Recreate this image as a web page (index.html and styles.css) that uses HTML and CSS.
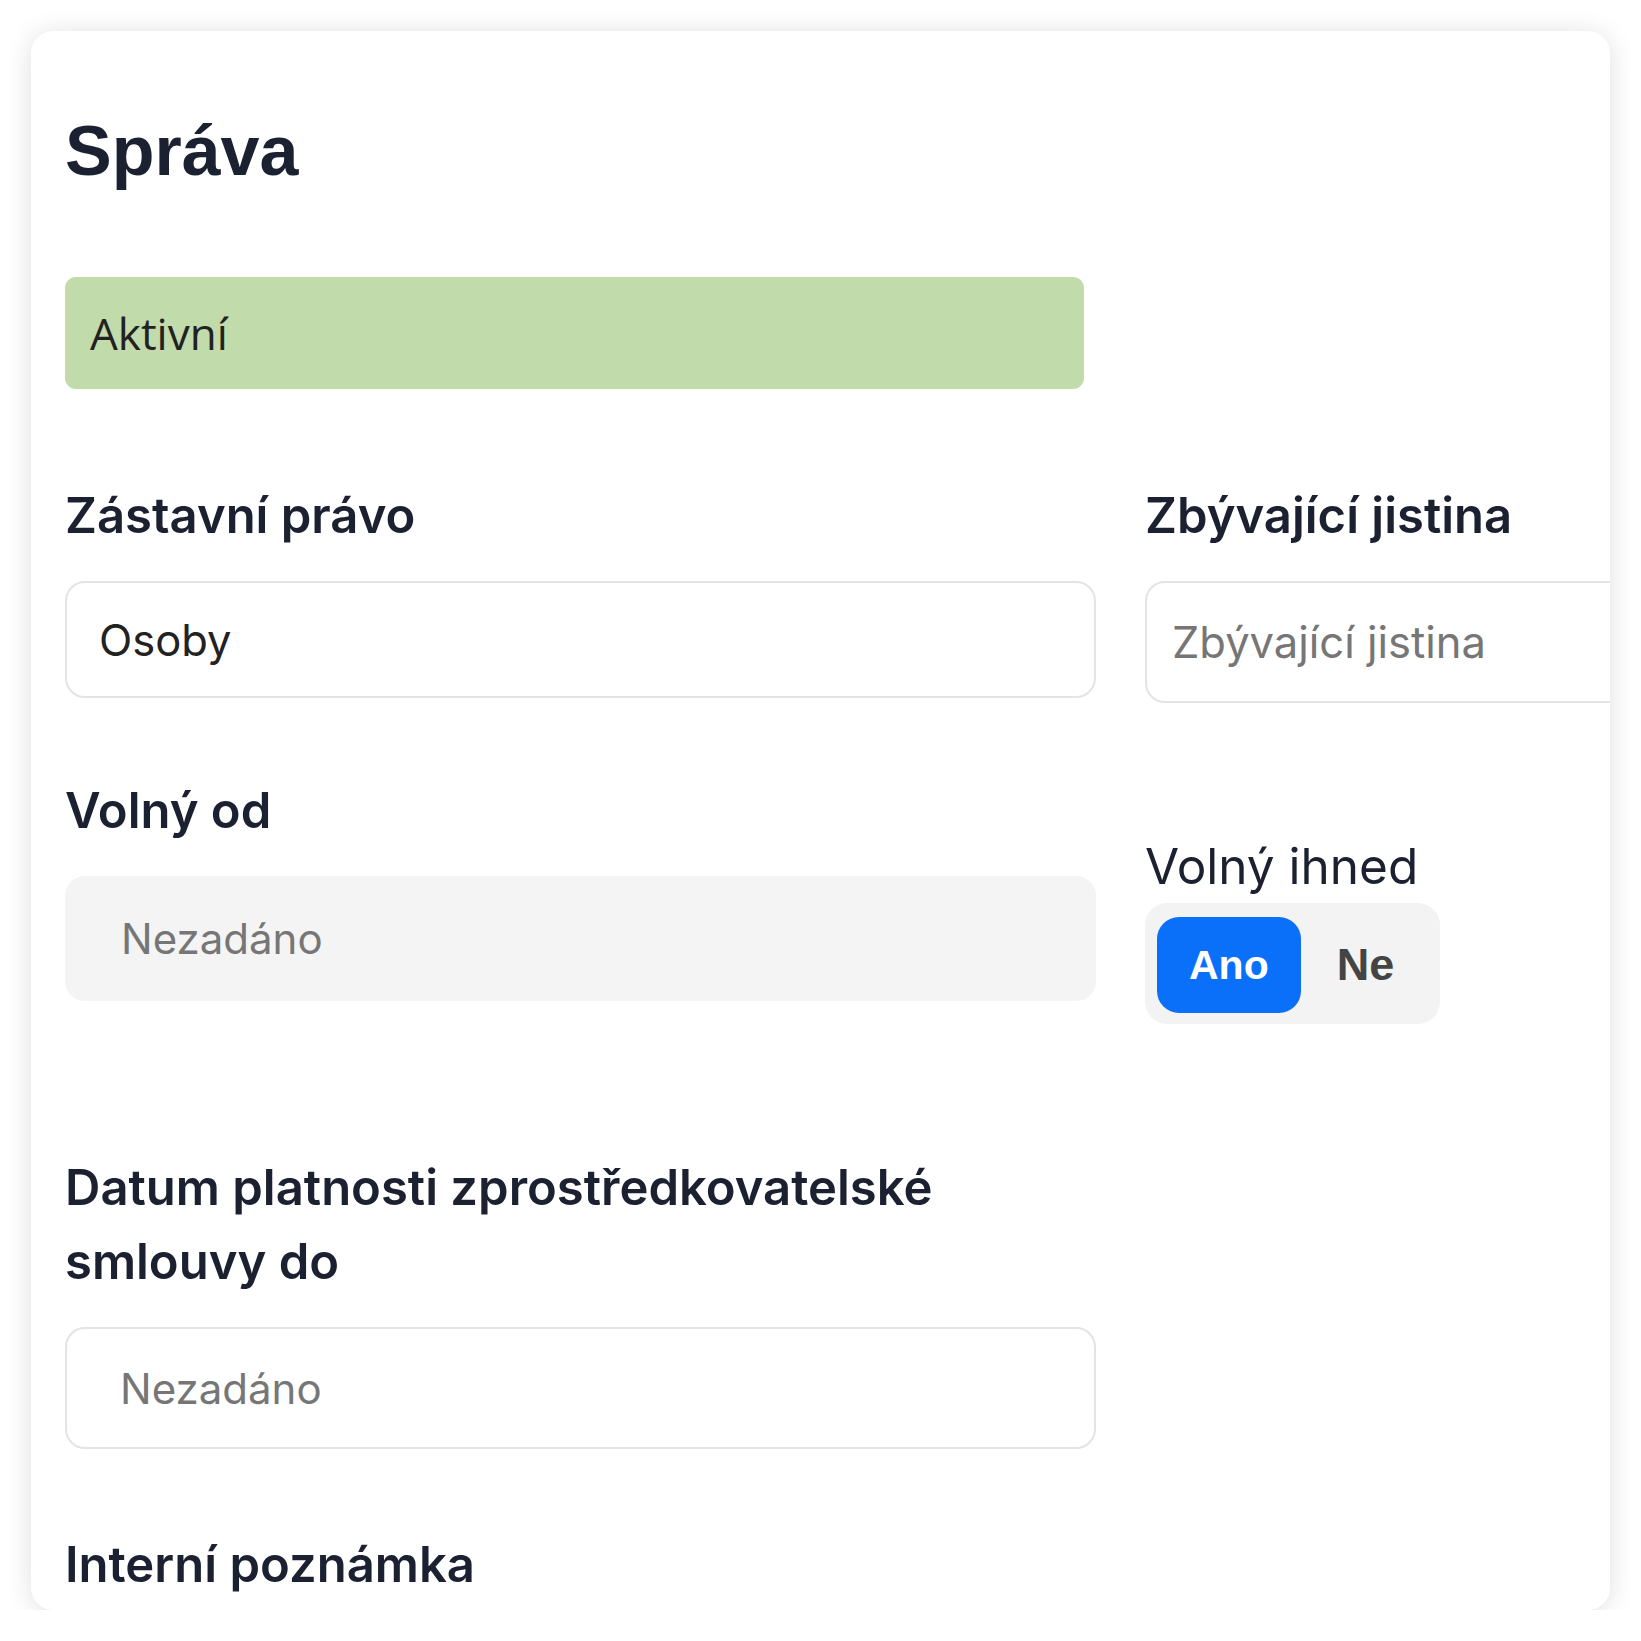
FILE: index.html
```html
<!DOCTYPE html>
<html lang="cs">
<head>
    <meta charset="UTF-8">
    <title>Správa</title>
    <link rel="stylesheet" href="styles.css">
</head>
<body>
    <section class="card">
        <h1 class="card-title">Správa</h1>

        <div class="status status-active">Aktivní</div>

        <div class="form-grid">
            <div class="field">
                <label class="field-label">Zástavní právo</label>
                <input class="field-input input-lien" type="text" value="Osoby">
            </div>
            <div class="field">
                <label class="field-label">Zbývající jistina</label>
                <input class="field-input input-principal" type="text" placeholder="Zbývající jistina">
            </div>

            <div class="field row-two">
                <label class="field-label">Volný od</label>
                <input class="field-input input-disabled" type="text" placeholder="Nezadáno" disabled>
            </div>
            <div class="field row-two field-toggle">
                <label class="field-label label-light">Volný ihned</label>
                <div class="toggle">
                    <button class="toggle-btn is-active" type="button">Ano</button>
                    <button class="toggle-btn" type="button">Ne</button>
                </div>
            </div>

            <div class="field row-three">
                <label class="field-label">Datum platnosti zprostředkovatelské smlouvy do</label>
                <input class="field-input input-date" type="text" placeholder="Nezadáno">
            </div>
            <div class="field row-three"></div>

            <div class="field row-four">
                <label class="field-label">Interní poznámka</label>
            </div>
        </div>
    </section>
</body>
</html>
```

FILE: styles.css
```css
/* Grundlayout */
html, body {
    margin: 0;
    padding: 0;
    background: #ffffff;
}
body {
    padding: 31px 0 0 31px;
    font-family: Inter, "Noto Sans", sans-serif;
    color: #1b2130;
}

/* Karte */
.card {
    width: 1579px;
    height: 1579px;
    box-sizing: border-box;
    padding: 80px 0 0 34px;
    background: #ffffff;
    border-radius: 22px;
    box-shadow: 0 2px 26px rgba(0, 0, 0, 0.13);
    overflow: hidden;
}
.card-title {
    margin: 0;
    font-family: "Liberation Sans", Arial, sans-serif;
    font-weight: 700;
    font-size: 70px;
    line-height: 80px;
    color: #1b2130;
}

/* Statusbalken */
.status {
    width: 1019px;
    height: 112px;
    margin-top: 86px;
    box-sizing: border-box;
    padding-left: 25px;
    display: flex;
    align-items: center;
    border-radius: 11px;
    font-family: "Open Sans", sans-serif;
    font-size: 44px;
    color: #222222;
}
.status-active {
    background: #c1dbab;
}

/* Formular */
.form-grid {
    display: grid;
    grid-template-columns: 1031px 1031px;
    column-gap: 49px;
    margin-top: 90px;
}
.field {
    display: flex;
    flex-direction: column;
}
.field-label {
    font-size: 49px;
    font-weight: 600;
    line-height: 74px;
    color: #1b2130;
}
.label-light {
    font-size: 49.5px;
    font-weight: 400;
}
.field-input {
    margin-top: 28px;
    box-sizing: border-box;
    border: 2px solid #e4e4e4;
    border-radius: 20px;
    background: #ffffff;
    font-family: Inter, "Noto Sans", sans-serif;
    font-size: 42px;
    color: #222222;
    outline: none;
}
.field-input::placeholder {
    color: #767676;
}
.input-lien {
    height: 117px;
    padding-left: 32px;
    font-size: 43.5px;
}
.input-principal {
    height: 122px;
    padding-left: 25px;
    font-size: 43.5px;
}
.input-disabled {
    height: 125px;
    padding-left: 54px;
    border-color: #f4f4f4;
    background: #f4f4f4;
}
.input-date {
    height: 122px;
    padding-left: 53px;
}

.row-two {
    margin-top: 71px;
}
.field-toggle {
    padding-top: 55px;
    align-items: flex-start;
}
.row-three {
    margin-top: 127px;
}
.row-four {
    margin-top: 79px;
}

/* Ja/Nein Umschalter */
.toggle {
    display: flex;
    padding: 14px 12px 11px 12px;
    background: #f3f3f3;
    border-radius: 22px;
}
.toggle-btn {
    height: 96px;
    padding: 0 34px 0 36px;
    border: none;
    border-radius: 22px;
    background: transparent;
    font-family: "Liberation Sans", Arial, sans-serif;
    font-weight: 700;
    font-size: 41px;
    color: #444444;
}
.toggle-btn.is-active {
    padding: 0 32px;
    background: #0a70fa;
    color: #ffffff;
}
.toggle-btn + .toggle-btn {
    font-size: 45px;
}
```
